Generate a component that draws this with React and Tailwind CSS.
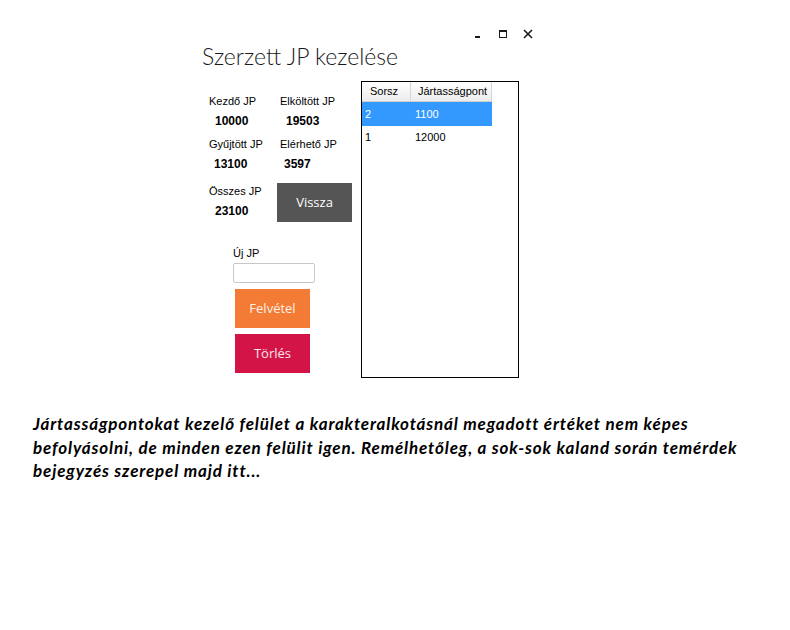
import React from 'react';

const stats = [
  { label: 'Kezdő JP', value: '10000' },
  { label: 'Elköltött JP', value: '19503' },
  { label: 'Gyűjtött JP', value: '13100' },
  { label: 'Elérhető JP', value: '3597' },
];

const rows = [
  { sorsz: '2', jp: '1100', selected: true },
  { sorsz: '1', jp: '12000', selected: false },
];

const WindowButtons = () => (
  <div className="flex justify-end items-center h-[12px] pr-[7px] gap-[15px]">
    <svg width="9" height="10" viewBox="0 0 9 10">
      <rect x="1" y="7" width="5" height="2" fill="#1a1a1a" />
    </svg>
    <svg width="10" height="10" viewBox="0 0 10 10">
      <rect x="1.5" y="1.5" width="7" height="7" fill="none" stroke="#1a1a1a" strokeWidth="1" />
      <rect x="1" y="1" width="8" height="2" fill="#1a1a1a" />
    </svg>
    <svg width="10" height="10" viewBox="0 0 10 10">
      <path d="M1 1 L9 9 M9 1 L1 9" stroke="#1a1a1a" strokeWidth="1.6" />
    </svg>
  </div>
);

const Stat = ({ label, value, labelPad, valuePad }) => (
  <div className="flex flex-col">
    <span className={`text-[11px] leading-[16px] text-black ${labelPad}`}>{label}</span>
    <span className={`text-[12px] leading-[16px] font-bold text-black mt-[4px] ${valuePad}`}>{value}</span>
  </div>
);

export default function App() {
  return (
    <div className="w-[790px] h-[630px] bg-white overflow-hidden" style={{ fontFamily: '"Liberation Sans", Arial, sans-serif' }}>
      <div className="pl-[198px] pt-[28px] w-[540px]">
        <WindowButtons />

        <div className="h-[41px] pl-[4px] pt-[1px]">
          <h1 className="text-[23px] leading-[30px] font-light text-[#1a1a1a]" style={{ fontFamily: 'Lato, "Open Sans", sans-serif' }}>
            Szerzett JP kezelése
          </h1>
        </div>

        <div className="flex">
          {/* Left side: stats and actions */}
          <div className="w-[163px] flex flex-col">
            <div className="flex pl-[11px] pt-[12px]">
              <div className="w-[68px] flex flex-col gap-[7px]">
                <Stat label={stats[0].label} value={stats[0].value} valuePad="pl-[6px]" />
                <Stat label={stats[2].label} value={stats[2].value} valuePad="pl-[5px]" />
                <div className="mt-[4px]">
                  <Stat label="Összes JP" value="23100" valuePad="pl-[6px]" />
                </div>
              </div>
              <div className="flex flex-col gap-[7px]">
                <Stat label={stats[1].label} value={stats[1].value} labelPad="pl-[3px]" valuePad="pl-[9px]" />
                <Stat label={stats[3].label} value={stats[3].value} labelPad="pl-[3px]" valuePad="pl-[7px]" />
                <button className="w-[75px] h-[39px] bg-[#555555] text-white text-[13px] mt-[4px]" style={{ fontFamily: '"Open Sans", sans-serif' }}>
                  Vissza
                </button>
              </div>
            </div>

            <div className="flex flex-col pl-[35px] mt-[23px]">
              <span className="text-[11px] leading-[16px] text-black">Új JP</span>
              <div className="w-[82px] h-[20px] mt-[2px] border border-[#c8c8c8] rounded-[2px] bg-white" />
              <button className="ml-[2px] mt-[6px] w-[75px] h-[39px] bg-[#f37b35] text-[#fdeee6] text-[13px]" style={{ fontFamily: '"Open Sans", sans-serif' }}>
                Felvétel
              </button>
              <button className="ml-[2px] mt-[6px] w-[75px] h-[39px] bg-[#d31446] text-[#fbe6ec] text-[13px]" style={{ fontFamily: '"Open Sans", sans-serif' }}>
                Törlés
              </button>
            </div>
          </div>

          {/* Data grid */}
          <div className="w-[158px] h-[297px] border border-black bg-white">
            <div className="flex h-[20px] w-[130px] bg-gradient-to-b from-white to-[#ececec] border-b border-[#d0d0d0] text-[11px] text-black">
              <div className="w-[49px] flex items-center pl-[8px] border-r border-[#d5d5d5]">Sorsz</div>
              <div className="w-[81px] flex items-center pl-[7px] border-r border-[#d5d5d5]">Jártasságpont</div>
            </div>
            {rows.map((r) => (
              <div
                key={r.sorsz}
                className={`flex w-[130px] text-[11px] ${r.selected ? 'h-[24px] bg-[#3399ff] text-white' : 'h-[22px] text-black'}`}
              >
                <div className="w-[49px] flex items-center pl-[3px]">{r.sorsz}</div>
                <div className="w-[81px] flex items-center pl-[4px]">{r.jp}</div>
              </div>
            ))}
          </div>
        </div>
      </div>

      <p
        className="pl-[33px] mt-[34px] text-[17px] leading-[23.5px] font-bold italic tracking-[0.85px] text-black whitespace-nowrap"
        style={{ fontFamily: 'Lato, "Liberation Sans", sans-serif' }}
      >
        Jártasságpontokat kezelő felület a karakteralkotásnál megadott értéket nem képes
        <br />
        befolyásolni, de minden ezen felülit igen. Remélhetőleg, a sok-sok kaland során temérdek
        <br />
        bejegyzés szerepel majd itt...
      </p>
    </div>
  );
}
